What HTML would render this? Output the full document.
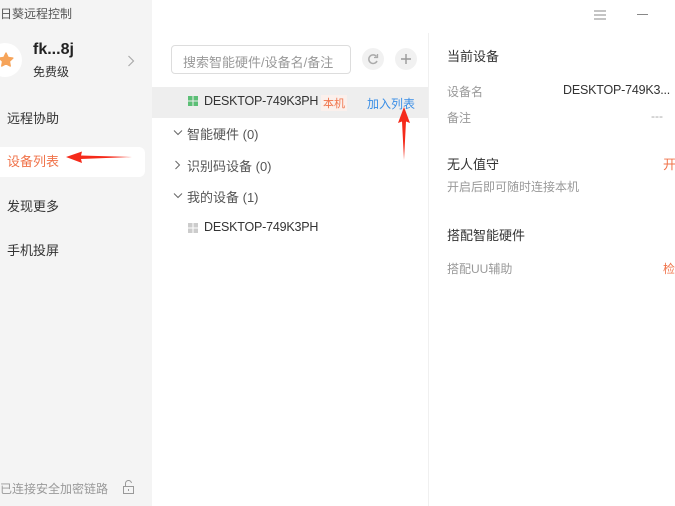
<!DOCTYPE html>
<html><head><meta charset="utf-8"><style>
*{margin:0;padding:0;box-sizing:border-box}
body{width:675px;height:506px;overflow:hidden;background:#fff;font-family:"Liberation Sans","Noto Sans CJK SC",sans-serif;position:relative;color:#333}
.a{position:absolute;white-space:nowrap}
#side{position:absolute;left:0;top:0;width:152px;height:506px;background:#f4f4f4}
#div{position:absolute;left:428px;top:33px;width:1px;height:473px;background:#f0f0f0}
.d{font-size:12.5px;letter-spacing:-0.2px}
</style></head><body>
<div id="side"></div>
<div id="div"></div>
<div class="a" style="left:0;top:5px;font-size:12px;color:#555">日葵远程控制</div>
<div class="a" style="left:-12px;top:43px;width:34px;height:34px;border-radius:50%;background:#fff"></div>
<svg class="a" style="left:-2px;top:52px" width="16" height="16" viewBox="0 0 22 22"><path d="M11 1.5l2.9 6 6.5.8-4.8 4.5 1.2 6.5L11 16.2 5.2 19.3l1.2-6.5L1.6 8.3l6.5-.8z" fill="#f6a45a" stroke="#f6a45a" stroke-linejoin="round" stroke-width="2"/></svg>
<div class="a" style="left:33px;top:41px;font-size:16px;font-weight:bold;color:#222">fk...8j</div>
<div class="a" style="left:33px;top:63px;font-size:12px;color:#333">免费级</div>
<svg class="a" style="left:127px;top:55px" width="8" height="12"><path d="M1.5 1l5 5-5 5" fill="none" stroke="#aaa" stroke-width="1.2"/></svg>
<div class="a" style="left:7px;top:108px;font-size:13px;color:#333">远程协助</div>
<div class="a" style="left:0;top:147px;width:145px;height:30px;background:#fff;border-radius:0 6px 6px 0"></div>
<div class="a" style="left:7px;top:151px;font-size:13px;color:#f0734a">设备列表</div>
<svg class="a" style="left:64px;top:149px" width="70" height="16"><path d="M2 8L18 2.5 17 6.5 68 8 17 10 18 14z" fill="#f52a1a"/></svg>
<div class="a" style="left:7px;top:196px;font-size:13px;color:#333">发现更多</div>
<div class="a" style="left:7px;top:240px;font-size:13px;color:#333">手机投屏</div>
<div class="a" style="left:0;top:480px;font-size:12px;color:#999">已连接安全加密链路</div>
<svg class="a" style="left:122px;top:480px" width="13" height="15"><path d="M3.5 6V4a3 3 0 0 1 6-1" fill="none" stroke="#999" stroke-width="1"/><rect x="1.5" y="6.5" width="10" height="7" fill="none" stroke="#999"/><path d="M6.5 9v2" stroke="#999"/></svg>

<div class="a" style="left:171px;top:45px;width:180px;height:29px;border:1px solid #ddd;border-radius:4px"></div>
<div class="a" style="left:183px;top:52px;font-size:13px;color:#999">搜索智能硬件/设备名/备注</div>
<div class="a" style="left:362px;top:48px;width:22px;height:22px;border-radius:50%;background:#f1f1f1"></div>
<svg class="a" style="left:366px;top:52px" width="14" height="14"><path d="M10.5 4.5A4.3 4.3 0 1 0 11 9" fill="none" stroke="#aaa" stroke-width="1.5"/><path d="M11.5 2v3.5H8" fill="none" stroke="#aaa" stroke-width="1.3"/></svg>
<div class="a" style="left:395px;top:48px;width:22px;height:22px;border-radius:50%;background:#f1f1f1"></div>
<svg class="a" style="left:399px;top:52px" width="14" height="14"><path d="M7 2v10M2 7h10" stroke="#999" stroke-width="1.4"/></svg>

<div class="a" style="left:152px;top:87px;width:276px;height:31px;background:#eeeeee"></div>
<svg class="a" style="left:188px;top:96px" width="10" height="10"><rect width="4.5" height="4.5" fill="#5cbf76"/><rect x="5.5" width="4.5" height="4.5" fill="#5cbf76"/><rect y="5.5" width="4.5" height="4.5" fill="#5cbf76"/><rect x="5.5" y="5.5" width="4.5" height="4.5" fill="#5cbf76"/></svg>
<div class="a d" style="left:204px;top:94px;color:#333">DESKTOP-749K3PH</div>
<div class="a" style="left:321px;top:95px;font-size:11px;color:#f0734a;background:#fbf0ec;padding:0 2px">本机</div>
<div class="a" style="left:367px;top:95px;font-size:12px;color:#3a8ee6">加入列表</div>
<svg class="a" style="left:396px;top:106px" width="16" height="55"><path d="M8 1L14 17 10 15.5 8 54 6 15.5 2 17z" fill="#f52a1a"/></svg>

<svg class="a" style="left:173px;top:129px" width="10" height="8"><path d="M1 1.5l4 4 4-4" fill="none" stroke="#666" stroke-width="1"/></svg>
<div class="a" style="left:187px;top:124px;font-size:13px;color:#555">智能硬件 (0)</div>
<svg class="a" style="left:174px;top:160px" width="8" height="10"><path d="M1.5 1l4 4-4 4" fill="none" stroke="#666" stroke-width="1"/></svg>
<div class="a" style="left:187px;top:156px;font-size:13px;color:#555">识别码设备 (0)</div>
<svg class="a" style="left:173px;top:192px" width="10" height="8"><path d="M1 1.5l4 4 4-4" fill="none" stroke="#666" stroke-width="1"/></svg>
<div class="a" style="left:187px;top:187px;font-size:13px;color:#555">我的设备 (1)</div>
<svg class="a" style="left:188px;top:223px" width="10" height="10"><rect width="4.5" height="4.5" fill="#ccc"/><rect x="5.5" width="4.5" height="4.5" fill="#ccc"/><rect y="5.5" width="4.5" height="4.5" fill="#ccc"/><rect x="5.5" y="5.5" width="4.5" height="4.5" fill="#ccc"/></svg>
<div class="a d" style="left:204px;top:220px;color:#333">DESKTOP-749K3PH</div>

<svg class="a" style="left:594px;top:10px" width="12" height="10"><path d="M0 1h12M0 5h12M0 9h12" stroke="#888" stroke-width="1"/></svg>
<div class="a" style="left:637px;top:14px;width:11px;height:1px;background:#888"></div>
<div class="a" style="left:447px;top:46px;font-size:13px;color:#333">当前设备</div>
<div class="a" style="left:447px;top:83px;font-size:12px;color:#999">设备名</div>
<div class="a d" style="left:563px;top:83px;color:#333">DESKTOP-749K3...</div>
<div class="a" style="left:447px;top:109px;font-size:12px;color:#999">备注</div>
<div class="a" style="left:651px;top:109px;font-size:12px;color:#aaa">---</div>
<div class="a" style="left:447px;top:154px;font-size:13px;color:#333">无人值守</div>
<div class="a" style="left:663px;top:154px;font-size:13px;color:#f0734a">开</div>
<div class="a" style="left:447px;top:178px;font-size:12px;color:#999">开启后即可随时连接本机</div>
<div class="a" style="left:447px;top:225px;font-size:13px;color:#333">搭配智能硬件</div>
<div class="a" style="left:447px;top:260px;font-size:12px;color:#999">搭配UU辅助</div>
<div class="a" style="left:663px;top:260px;font-size:12px;color:#f0734a">检</div>
</body></html>
